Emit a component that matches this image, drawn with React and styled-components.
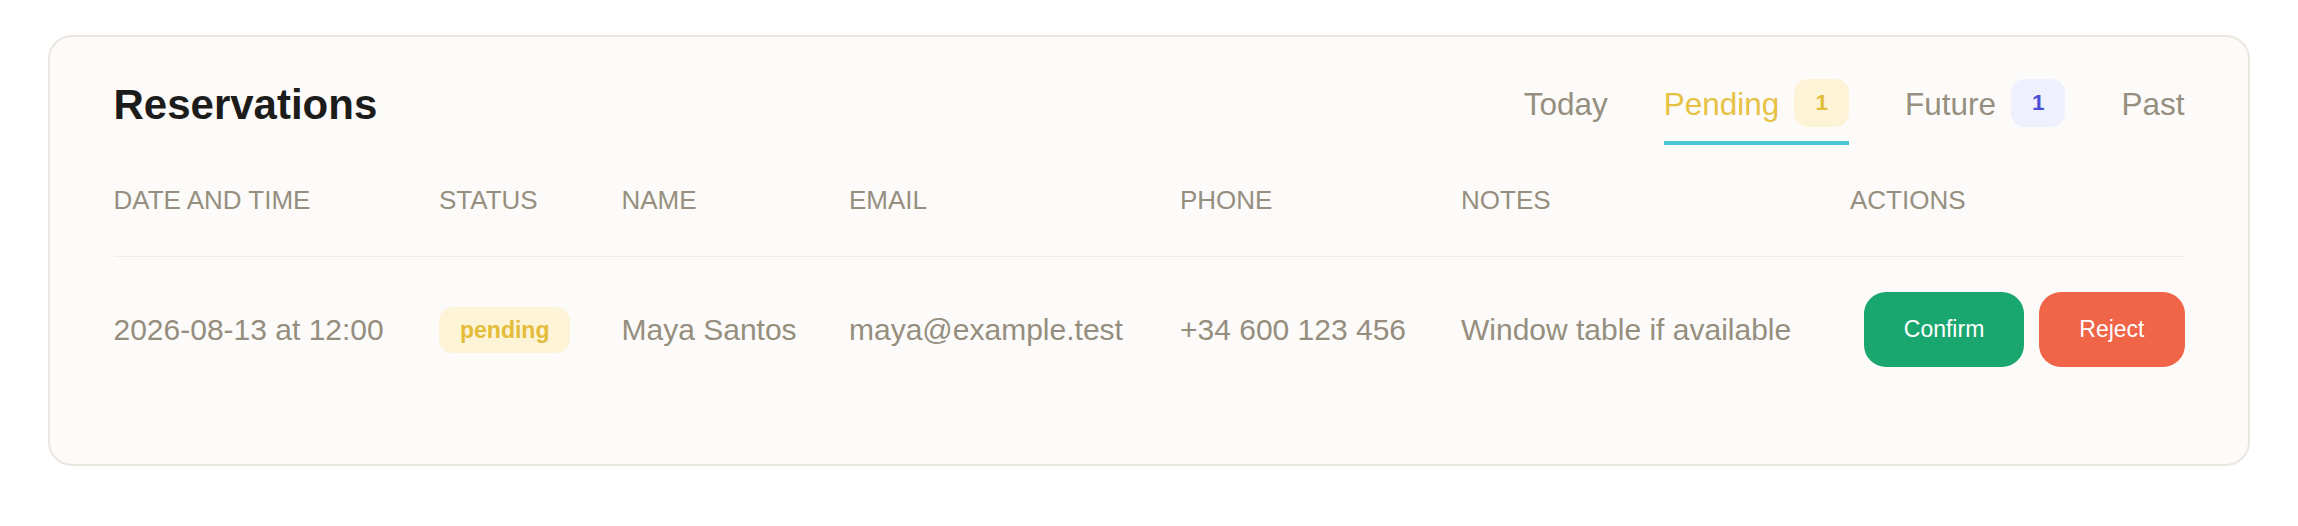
import styled, { createGlobalStyle } from "styled-components";

const GlobalStyle = createGlobalStyle`
  html, body {
    margin: 0;
    padding: 0;
    background: #ffffff;
  }
  body {
    font-family: "Liberation Sans", Arial, Helvetica, sans-serif;
    -webkit-font-smoothing: antialiased;
  }
`;

const Page = styled.div`
  padding: 35px 48px 40px;
`;

const Card = styled.section`
  background: #fcfbf9;
  border: 2px solid #ebe7e0;
  border-radius: 24px;
  padding: 42px 63.5px 61.5px;
`;

const Header = styled.div`
  display: flex;
  justify-content: space-between;
  align-items: flex-start;
`;

const Title = styled.h1`
  margin: 1.5px 0 0;
  font-size: 42px;
  line-height: 48px;
  font-weight: 700;
  color: #1c1c1b;
`;

const Tabs = styled.nav`
  display: flex;
  gap: 56px;
`;

const Tab = styled.div`
  display: flex;
  align-items: center;
  gap: 15px;
  height: 48px;
  padding-bottom: 14px;
  border-bottom: 4px solid ${(p) => (p.$active ? "#4fc4d5" : "transparent")};
  font-size: 31.5px;
  color: ${(p) => (p.$active ? "#e6c142" : "#968f80")};
  cursor: pointer;
`;

const TabLabel = styled.span`
  padding-top: 2px;
`;

const CountBadge = styled.span`
  display: inline-flex;
  align-items: center;
  justify-content: center;
  height: 48px;
  padding: 0 21px;
  border-radius: 14px;
  font-size: 22.5px;
  font-weight: 700;
  background: ${(p) => (p.$tone === "blue" ? "#eef0fe" : "#fdf4d7")};
  color: ${(p) => (p.$tone === "blue" ? "#4b50d8" : "#e2bc3a")};
`;

const Table = styled.table`
  width: 100%;
  table-layout: fixed;
  border-collapse: collapse;
`;

const Col = styled.col`
  width: ${(p) => p.$width || "auto"};
`;

const Th = styled.th`
  padding: 39.5px 0 41px;
  border-bottom: 1px solid #f1ece5;
  text-align: left;
  font-size: 26px;
  line-height: 30px;
  font-weight: 400;
  text-transform: uppercase;
  color: #968f80;
`;

const Td = styled.td`
  padding: 35.5px 0;
  vertical-align: middle;
  font-size: 30px;
  line-height: 36px;
  color: #958e7e;
  white-space: nowrap;
`;

const StatusPill = styled.span`
  display: inline-block;
  height: 46px;
  line-height: 46px;
  padding: 0 21px;
  border-radius: 14px;
  background: #fdf4d7;
  color: #e3bd3a;
  font-size: 23px;
  font-weight: 700;
`;

const Actions = styled.div`
  display: flex;
  justify-content: flex-end;
  gap: 15px;
`;

const ActionButton = styled.button`
  height: 75px;
  padding: 0 40px;
  border: none;
  border-radius: 22px;
  font-family: inherit;
  font-size: 23px;
  color: #ffffff;
  background: ${(p) => (p.$variant === "danger" ? "#f06548" : "#1aa76f")};
  cursor: pointer;
`;

const tabs = [
  { label: "Today" },
  { label: "Pending", count: 1, tone: "yellow", active: true },
  { label: "Future", count: 1, tone: "blue" },
  { label: "Past" },
];

const columns = [
  { label: "Date and time", width: "325.5px" },
  { label: "Status", width: "182.5px" },
  { label: "Name", width: "227.5px" },
  { label: "Email", width: "331px" },
  { label: "Phone", width: "281px" },
  { label: "Notes", width: "389px" },
  { label: "Actions" },
];

const reservations = [
  {
    id: 1,
    date: "2026-08-13 at 12:00",
    status: "pending",
    name: "Maya Santos",
    email: "maya@example.test",
    phone: "+34 600 123 456",
    notes: "Window table if available",
  },
];

const App = () => {
  return (
    <Page>
      <GlobalStyle />
      <Card>
        <Header>
          <Title>Reservations</Title>
          <Tabs>
            {tabs.map((t) => (
              <Tab key={t.label} $active={t.active}>
                <TabLabel>{t.label}</TabLabel>
                {t.count && <CountBadge $tone={t.tone}>{t.count}</CountBadge>}
              </Tab>
            ))}
          </Tabs>
        </Header>
        <Table>
          <colgroup>
            {columns.map((c) => (
              <Col key={c.label} $width={c.width} />
            ))}
          </colgroup>
          <thead>
            <tr>
              {columns.map((c) => (
                <Th key={c.label}>{c.label}</Th>
              ))}
            </tr>
          </thead>
          <tbody>
            {reservations.map((r) => (
              <tr key={r.id}>
                <Td>{r.date}</Td>
                <Td>
                  <StatusPill>{r.status}</StatusPill>
                </Td>
                <Td>{r.name}</Td>
                <Td>{r.email}</Td>
                <Td>{r.phone}</Td>
                <Td>{r.notes}</Td>
                <Td>
                  <Actions>
                    <ActionButton>Confirm</ActionButton>
                    <ActionButton $variant="danger">Reject</ActionButton>
                  </Actions>
                </Td>
              </tr>
            ))}
          </tbody>
        </Table>
      </Card>
    </Page>
  );
};

export default App;
